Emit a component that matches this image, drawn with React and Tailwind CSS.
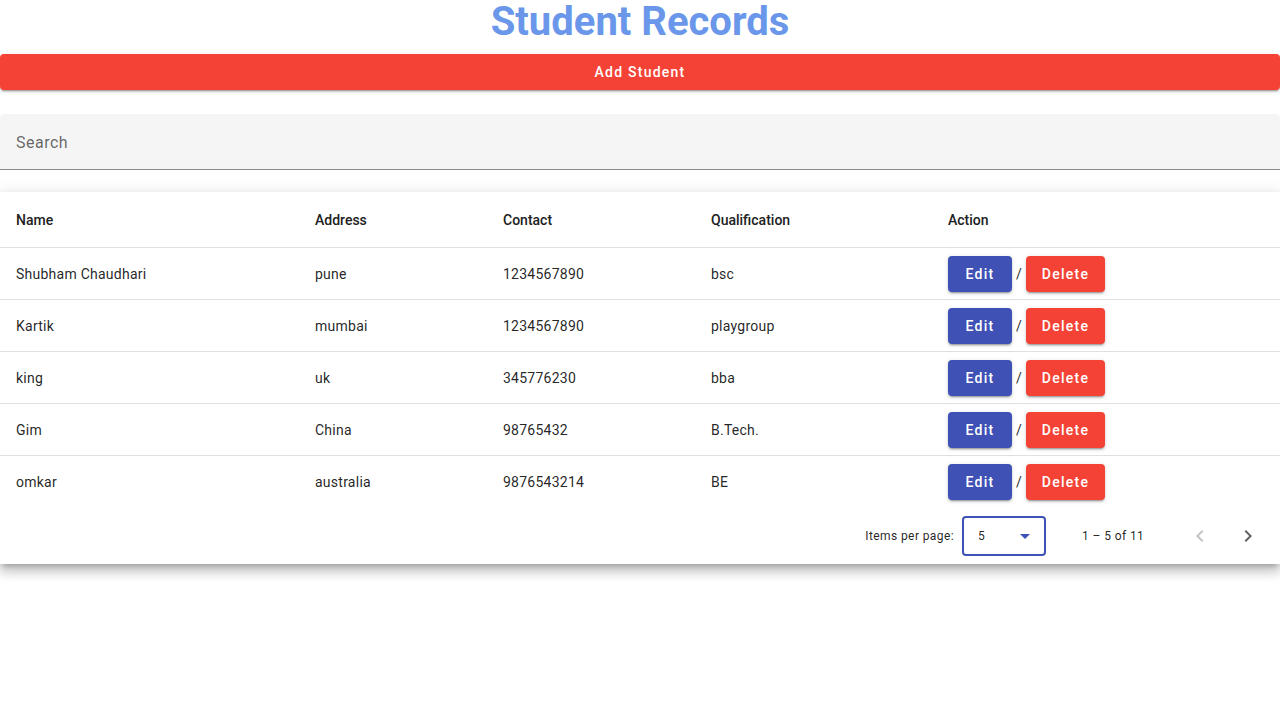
import React from "react";

const students = [
  { name: "Shubham Chaudhari", address: "pune", contact: "1234567890", qualification: "bsc" },
  { name: "Kartik", address: "mumbai", contact: "1234567890", qualification: "playgroup" },
  { name: "king", address: "uk", contact: "345776230", qualification: "bba" },
  { name: "Gim", address: "China", contact: "98765432", qualification: "B.Tech." },
  { name: "omkar", address: "australia", contact: "9876543214", qualification: "BE" },
];

const cols = "grid grid-cols-[315px_188px_208px_237px_1fr] items-center";
const raised = "shadow-[0_3px_1px_-2px_rgba(0,0,0,.2),0_2px_2px_0_rgba(0,0,0,.14),0_1px_5px_0_rgba(0,0,0,.12)]";

export default function App() {
  return (
    <main className="min-h-screen bg-white font-['Roboto',sans-serif] text-[rgba(0,0,0,0.87)]">
      <h1 className="mb-[12px] pt-[2px] text-center text-[40px] leading-10 font-bold text-[#6a97ea]">Student Records</h1>

      <button
        type="button"
        className={`flex h-9 w-full items-center justify-center rounded bg-[#f44336] text-sm font-medium tracking-[1.25px] text-white ${raised}`}
      >
        Add Student
      </button>

      <div className="mt-6 flex h-14 items-center rounded-t border-b border-[#8a8a8a] bg-[#f5f5f5] px-4 pt-[2px]">
        <span className="text-base tracking-[0.5px] text-[rgba(0,0,0,0.6)]">Search</span>
      </div>

      <section className="mt-[22px] bg-white shadow-[0_5px_5px_-3px_rgba(0,0,0,.2),0_8px_10px_1px_rgba(0,0,0,.14),0_3px_14px_2px_rgba(0,0,0,.12)]">
        <div className={`${cols} h-14 border-b border-[#e0e0e0] text-sm font-medium text-[#212121]`}>
          <div className="pl-4">Name</div>
          <div>Address</div>
          <div>Contact</div>
          <div>Qualification</div>
          <div>Action</div>
        </div>

        {students.map((s, i) => (
          <div
            key={s.name}
            className={`${cols} h-[52px] text-sm tracking-[0.25px] ${i < students.length - 1 ? "border-b border-[#e0e0e0]" : ""}`}
          >
            <div className="pl-4">{s.name}</div>
            <div>{s.address}</div>
            <div>{s.contact}</div>
            <div>{s.qualification}</div>
            <div className="flex items-center">
              <button type="button" className={`h-9 w-16 rounded bg-[#3f51b5] text-sm font-medium tracking-[1.25px] text-white ${raised}`}>
                Edit
              </button>
              <span className="mx-[4px] text-sm">/</span>
              <button type="button" className={`h-9 w-[79px] rounded bg-[#f44336] text-sm font-medium tracking-[1.25px] text-white ${raised}`}>
                Delete
              </button>
            </div>
          </div>
        ))}

        <div className="flex h-14 items-center justify-end text-xs tracking-[0.4px]">
          <span className="mr-2">Items per page:</span>
          <div className="flex h-10 w-[84px] items-center justify-between rounded border-2 border-[#3f51b5] px-[14px]">
            <span>5</span>
            <svg width="10" height="5" viewBox="0 0 10 5">
              <path d="M0 0 L5 5 L10 0 Z" fill="#3f51b5" />
            </svg>
          </div>
          <span className="ml-9 mr-[26px] w-[72px]">1 – 5 of 11</span>
          <div className="flex items-center">
            <button type="button" className="flex h-10 w-10 items-center justify-center text-[#c2c2c2]">
              <svg width="24" height="24" viewBox="0 0 24 24" fill="currentColor">
                <path d="M15.41 7.41 14 6l-6 6 6 6 1.41-1.41L10.83 12z" />
              </svg>
            </button>
            <button type="button" className="ml-2 mr-3 flex h-10 w-10 items-center justify-center text-[#616161]">
              <svg width="24" height="24" viewBox="0 0 24 24" fill="currentColor">
                <path d="M10 6 8.59 7.41 13.17 12l-4.58 4.59L10 18l6-6z" />
              </svg>
            </button>
          </div>
        </div>
      </section>
    </main>
  );
}
